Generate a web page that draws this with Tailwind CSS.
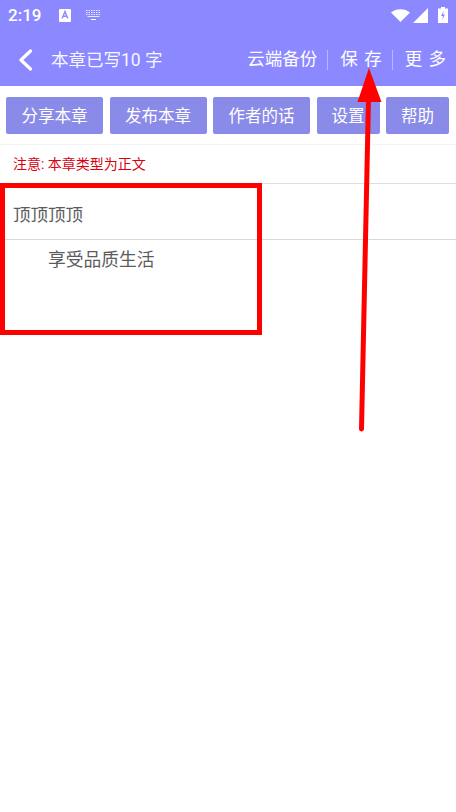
<!DOCTYPE html>
<html lang="zh">
  <head>
    <meta charset="UTF-8" />
    <meta name="viewport" content="width=device-width, initial-scale=1.0" />
    <title>写作</title>
    <script src="https://cdn.jsdelivr.net/npm/@tailwindcss/browser@4"></script>
  </head>
  <body class="bg-white font-['Roboto','Noto_Sans_CJK_SC',sans-serif]">
    <div class="relative w-[456px] h-[812px] overflow-hidden bg-white">
      <!-- status bar -->
      <div class="h-[36px] bg-[#8c88ff] flex items-center text-white pl-[8px] pr-[8px]">
        <span class="text-[17px] font-medium w-[51px] leading-none mb-[6px]">2:19</span>
        <svg class="mb-[6px]" width="12" height="13" viewBox="0 0 12 13">
          <rect width="12" height="13" rx="1" fill="#fff" />
          <path d="M3.200 9.500 6 2.500 8.800 9.500M4.300 7.200h3.400" stroke="#8c88ff" stroke-width="1.400" fill="none" />
        </svg>
        <svg class="ml-[14px] mb-[6px]" width="17" height="12" viewBox="0 0 17 12" fill="none" stroke="#fff">
          <path d="M1 1.500h15M1 3.500h15M1 5.500h15" stroke-dasharray="1.500 1" opacity=".8" />
          <path d="M2.500 7.500h12" opacity=".8" />
          <path d="M6 10.500h5" />
        </svg>
        <svg class="ml-auto mb-[6px]" width="19" height="13" viewBox="0 0 19 13" fill="#fff">
          <path d="M0 3.500C5 -1 14 -1 19 3.500L9.500 13z" />
        </svg>
        <svg class="ml-[3px] mb-[6px]" width="15" height="15" viewBox="0 0 15 15" fill="#fff">
          <path d="M15 0V15H0z" />
        </svg>
        <svg class="ml-[10px] mb-[6px]" width="10" height="16" viewBox="0 0 10 16">
          <path d="M3 0h4v1.500h3V16H0V1.500h3z" fill="#fff" />
          <path d="M5.800 3.500 3 9h2l-.8 4L7 7.500H5z" fill="#8c88ff" />
        </svg>
      </div>

      <!-- header -->
      <div class="h-[50px] bg-[#8c88ff] flex items-center text-white">
        <svg class="ml-[18px] mb-[3px]" width="15" height="22" viewBox="0 0 15 22" fill="none">
          <path d="M12.500 2 3 11l9.500 9" stroke="#fff" stroke-width="3.200" stroke-linecap="round" stroke-linejoin="round" />
        </svg>
        <span class="ml-[18px] text-[17.500px] leading-none mt-[-1px] text-white/95">本章已写10 字</span>
        <div class="ml-auto flex items-center mt-[-3px] mr-[9px] text-[17.500px] leading-none">
          <span class="pr-[10px] border-r border-white/40 h-[20px] flex items-center">云端备份</span>
          <span class="pl-[12px] pr-[9px] tracking-[1px] border-r border-white/40 h-[20px] flex items-center whitespace-pre">保 存</span>
          <span class="pl-[12px] tracking-[1px] h-[20px] flex items-center whitespace-pre">更 多</span>
        </div>
      </div>

      <!-- toolbar -->
      <div class="h-[59px] flex items-start pt-[11px] pl-[6px] gap-[6.500px] border-b border-gray-100 text-white text-[16.500px]">
        <button class="w-[97px] h-[37px] pt-[3px] rounded-[2px] bg-[#8a8ae8]">分享本章</button>
        <button class="w-[97px] h-[37px] pt-[3px] rounded-[2px] bg-[#8a8ae8]">发布本章</button>
        <button class="w-[97px] h-[37px] pt-[3px] rounded-[2px] bg-[#8a8ae8]">作者的话</button>
        <button class="w-[63px] h-[37px] pt-[3px] rounded-[2px] bg-[#8a8ae8]">设置</button>
        <button class="w-[63px] h-[37px] pt-[3px] rounded-[2px] bg-[#8a8ae8]">帮助</button>
      </div>

      <!-- notice -->
      <div class="h-[39px] flex items-center pl-[13px] border-b border-[#dedede] text-[14px] text-[#d9000f]">注意: 本章类型为正文</div>

      <!-- title -->
      <div class="h-[56px] flex items-center pt-[7px] pl-[13px] border-b border-[#d8d8d8] text-[17.500px] text-[#5c5c5c]">顶顶顶顶</div>

      <!-- body -->
      <div class="pl-[48px] pt-[8px] text-[17.750px] leading-[24px] text-[#5c5c5c]">享受品质生活</div>

      <!-- annotation box -->
      <div class="absolute left-0 top-[183px] w-[262px] h-[152px] border-[5px] border-[#ff0000]"></div>

      <!-- annotation arrow -->
      <svg class="absolute left-0 top-0" width="456" height="812" viewBox="0 0 456 812" fill="none">
        <path d="M361.500 429 368.500 98" stroke="#ff0000" stroke-width="5" stroke-linecap="round" />
        <path d="M369 68 381.500 102H357.500z" fill="#ff0000" />
      </svg>
    </div>
  </body>
</html>
